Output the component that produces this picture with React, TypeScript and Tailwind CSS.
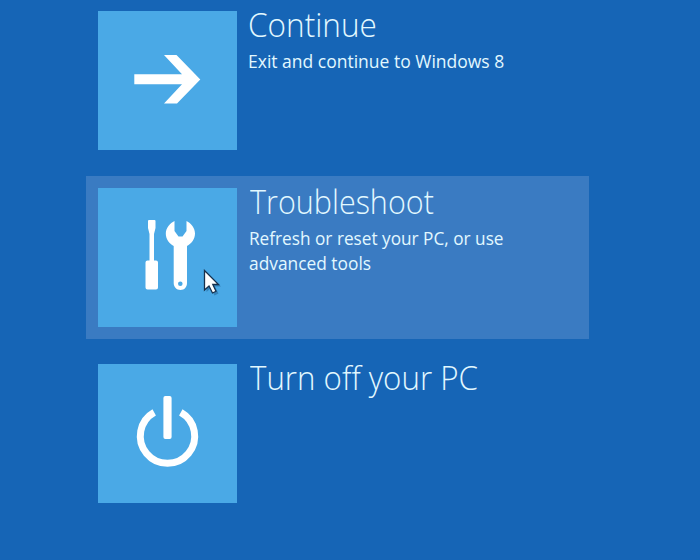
import type { ReactNode } from 'react'

interface OptionProps {
  title: string
  titleClass: string
  lines?: { text: string; className: string }[]
  icon: ReactNode
  active?: boolean
}

function ArrowIcon() {
  return (
    <svg className="size-full" viewBox="0 0 139 139" fill="#fff" aria-hidden="true">
      <path d="M36.300 63.200H84L66 44h12.500L102.300 68.500 79 92.500H66l18-19.200H36.300z" />
    </svg>
  )
}

function ToolsIcon() {
  return (
    <svg className="size-full" viewBox="0 0 139 139" fill="#fff" aria-hidden="true">
      <path d="M51 32h5.500q1 0 1 1v7l-1.500 6v26.500h2q2 0 2 2v25q0 2-2 2h-8.500q-2 0-2-2v-25q0-2 2-2h2V46L50 40v-7q0-1 1-1z" />
      <path
        fillRule="evenodd"
        d="M76.500 33v10l4 5.500h4L88.500 43V33c4.500 2 8.500 7 8.500 12.500 0 5.500-3.500 10-8 12.500v37c0 4.200-2.700 7-6.500 7s-6.800-2.800-6.800-7V58c-4.500-2.500-7.900-7-7.900-12.500 0-5.500 4.200-10.500 8.700-12.500zM82.300 93.500a2.300 2.300 0 1 0 0 4.600 2.300 2.300 0 0 0 0-4.600z"
      />
    </svg>
  )
}

function PowerIcon() {
  return (
    <svg className="size-full" viewBox="0 0 139 139" fill="none" aria-hidden="true">
      <path d="M56.200 48.400a27.200 27.200 0 1 0 26.600 0" stroke="#fff" strokeWidth="7" />
      <rect x="65.400" y="32" width="8.200" height="43" rx="2" fill="#fff" />
    </svg>
  )
}

function Cursor() {
  return (
    <svg
      className="absolute top-[81px] left-[105px] h-[28px] w-[20px]"
      viewBox="0 0 20 28"
      aria-hidden="true"
    >
      <path d="M3.500 3v20l4.500-4 3.500 7.500 4-2-3.500-7h6z" fill="#174a78" opacity=".4" />
      <path
        d="M1.500 1.500v19.500l4.500-4 3.500 7 3.500-1.700-3.200-6.800h5.700z"
        fill="#fff"
        stroke="#16304c"
        strokeWidth="1.300"
      />
    </svg>
  )
}

function Option({ title, titleClass, lines = [], icon, active = false }: OptionProps) {
  return (
    <button
      type="button"
      className={
        active
          ? 'flex h-[163px] w-[503px] items-start bg-[#3a7bc2] p-3 text-left'
          : 'flex h-[163px] w-[503px] items-start p-3 text-left last:-mt-px'
      }
    >
      <span className="relative block size-[139px] shrink-0 bg-[#4aa9e6]">
        {icon}
        {active && <Cursor />}
      </span>
      <span className="block pl-3 whitespace-nowrap text-[#e2f8ff]">
        <span className={titleClass}>{title}</span>
        {lines.map((line) => (
          <span key={line.text} className={line.className}>
            {line.text}
          </span>
        ))}
      </span>
    </button>
  )
}

function App() {
  return (
    <main className="h-[560px] w-[700px] overflow-hidden bg-[#1665b6] pl-[86px] font-['Open_Sans',sans-serif]">
      <div className="-mt-px flex flex-col gap-[14px]">
        <Option
          title="Continue"
          titleClass="-ml-px block w-fit origin-left scale-x-[0.955] text-[33px] leading-[28px] font-light"
          lines={[
            {
              text: 'Exit and continue to Windows 8',
              className:
                '-ml-px mt-[9px] block w-fit origin-left scale-x-[0.921] text-[19px] leading-[26px]',
            },
          ]}
          icon={<ArrowIcon />}
        />
        <Option
          title="Troubleshoot"
          titleClass="ml-px block w-fit origin-left scale-x-[0.925] text-[33px] leading-[28px] font-light"
          lines={[
            {
              text: 'Refresh or reset your PC, or use',
              className:
                'mt-[9px] block w-fit origin-left scale-x-[0.906] text-[19px] leading-[26px]',
            },
            {
              text: 'advanced tools',
              className:
                '-mt-px block w-fit origin-left scale-x-[0.913] text-[19px] leading-[26px]',
            },
          ]}
          icon={<ToolsIcon />}
          active
        />
        <Option
          title="Turn off your PC"
          titleClass="ml-px block w-fit origin-left scale-x-[0.947] text-[33px] leading-[28px] font-light"
          icon={<PowerIcon />}
        />
      </div>
    </main>
  )
}

export default App
